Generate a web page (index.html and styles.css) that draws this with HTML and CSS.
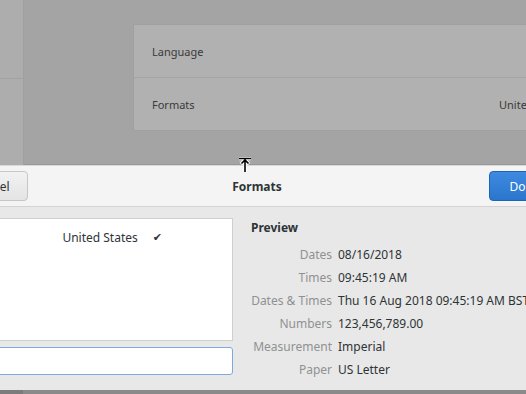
FILE: index.html
```html
<!DOCTYPE html>
<html>
<head>
<title>Formats</title>
<link rel="stylesheet" href="styles.css">
</head>
<body>
<div class="window">
  <div class="sidebar">
    <div class="side-row"></div>
  </div>
  <div class="main">
    <div class="card">
      <div class="row">Language</div>
      <div class="row">
        <span>Formats</span>
        <span class="row-value">United States</span>
      </div>
    </div>
  </div>
</div>

<div class="dialog">
  <div class="header">
    <button class="btn btn-cancel">Cancel</button>
    <div class="title">Formats</div>
    <button class="btn btn-blue">Done</button>
  </div>
  <div class="content">
    <div class="left">
      <div class="list">
        <div class="list-item">
          <span>United States</span>
          <span class="check">&#10004;</span>
        </div>
      </div>
      <div class="search"></div>
    </div>
    <div class="preview">
      <div class="preview-title">Preview</div>
      <div class="grid">
        <div class="lbl">Dates</div><div class="val">08/16/2018</div>
        <div class="lbl">Times</div><div class="val">09:45:19 AM</div>
        <div class="lbl">Dates &amp; Times</div><div class="val">Thu 16 Aug 2018 09:45:19 AM BST</div>
        <div class="lbl">Numbers</div><div class="val">123,456,789.00</div>
        <div class="lbl">Measurement</div><div class="val">Imperial</div>
        <div class="lbl">Paper</div><div class="val">US Letter</div>
      </div>
    </div>
  </div>
</div>

<div class="bottom">
  <div class="bottom-side"></div>
</div>

<!-- resize cursor over the dialog edge -->
<svg class="cursor" width="14" height="16" viewBox="0 0 14 16">
  <path d="M1 1.5h12M7 3v12M3 7l4-4 4 4" stroke="#fff" stroke-width="3.5" fill="none"/>
  <path d="M1 1.5h12M7 3v12M3.5 6.5L7 3l3.5 3.5" stroke="#000" stroke-width="1.6" fill="none"/>
</svg>
</body>
</html>
```

FILE: styles.css
```css
body {
  margin: 0;
  width: 526px;
  height: 394px;
  overflow: hidden;
  position: relative;
  font-family: "Noto Sans", "DejaVu Sans", sans-serif;
  font-size: 12px;
  color: #2e3436;
  background: #a3a3a3;
}
.window {
  display: flex;
  height: 165px;
}
.sidebar {
  flex-shrink: 0;
  width: 23px;
  background: #adadad;
  border-right: 1px solid #a0a0a0;
}
.side-row {
  height: 78px;
  border-bottom: 1px solid #a2a2a2;
}
.main {
  flex: 1;
  min-width: 0;
  padding: 24px 0 0 109px;
  background: #a4a4a4;
  border-bottom: 1px solid #979797;
  box-sizing: border-box;
}
.card {
  background: #b1b1b1;
  border: 1px solid #a0a0a0;
  border-right: none;
  width: 420px;
}
.row {
  height: 52px;
  display: flex;
  align-items: center;
  justify-content: space-between;
  padding: 0 0 0 18px;
  color: #3a3a3a;
  font-size: 11px;
  white-space: nowrap;
}
.row + .row {
  border-top: 1px solid #a6a6a6;
}
.row-value {
  width: 55px;
}
.dialog {
  margin-left: -52px;
  width: 618px;
  background: #e8e8e8;
}
.header {
  height: 42px;
  display: grid;
  grid-template-columns: 1fr auto 1fr;
  align-items: center;
  padding: 0 6px;
  background: #f4f4f4;
  border-bottom: 1px solid #d3d3d3;
  border-top: 1px solid #d9d9d9;
  box-sizing: border-box;
}
.title {
  font-weight: bold;
  font-size: 12px;
}
.btn {
  height: 30px;
  font-family: inherit;
  font-size: 12px;
  color: #2e3436;
  background: linear-gradient(#f2f2f2, #e4e4e4);
  border: 1px solid #c6c6c6;
  border-radius: 4px;
}
.btn-cancel {
  justify-self: start;
  width: 74px;
}
.btn-blue {
  justify-self: end;
  width: 71px;
  color: #fff;
  background: linear-gradient(#3e8ae0, #2a76cc);
  border-color: #1f63b4;
}
.content {
  display: flex;
  gap: 18px;
  padding: 11px 0 12px 17px;
}
.left {
  width: 268px;
  display: flex;
  flex-direction: column;
  gap: 6px;
}
.list {
  height: 121px;
  background: #fff;
  border: 1px solid #cfcfcf;
}
.list-item {
  display: flex;
  justify-content: flex-end;
  gap: 15px;
  padding: 10px 70px 0 0;
}
.check {
  font-size: 11px;
}
.search {
  height: 26px;
  background: #fff;
  border: 1px solid #7fa9dc;
  border-radius: 3px;
}
.preview {
  padding-top: 1px;
}
.preview-title {
  font-weight: bold;
  height: 17px;
}
.grid {
  display: grid;
  grid-template-columns: 81px auto;
  column-gap: 6px;
  row-gap: 6px;
  margin-top: 10px;
  white-space: nowrap;
}
.lbl {
  text-align: right;
  color: #8f9192;
  line-height: 17px;
}
.val {
  line-height: 17px;
}
.bottom {
  display: flex;
  height: 10px;
  background: #8a8a8a;
}
.bottom-side {
  width: 23px;
  background: #7c7c7c;
}
.cursor {
  position: absolute;
  left: 238px;
  top: 157px;
}
```
